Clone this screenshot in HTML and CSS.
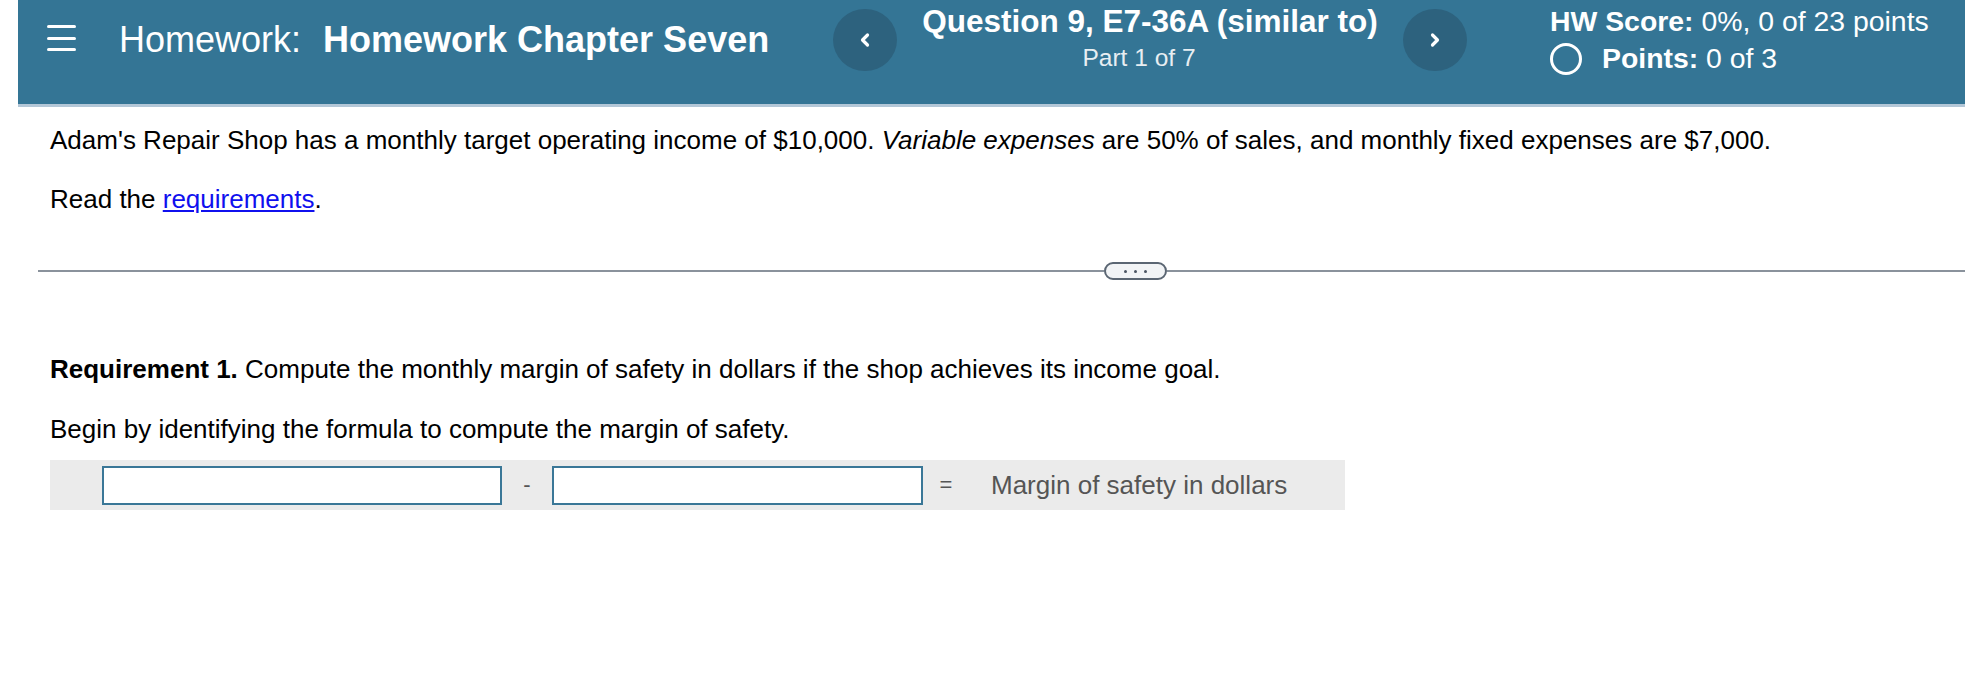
FILE: index.html
```html
<!DOCTYPE html>
<html>
<head>
<meta charset="utf-8">
<link rel="stylesheet" href="styles.css">
</head>
<body>
<header class="topbar">
  <div class="left">
    <div class="hamburger"><span></span><span></span><span></span></div>
    <div class="hw-title">Homework: <b>Homework Chapter Seven</b></div>
  </div>
  <div class="center">
    <div class="navbtn"><svg width="12" height="16" viewBox="0 0 12 16"><path d="M8.5 3 L3.5 8 L8.5 13" fill="none" stroke="#fff" stroke-width="3.2" stroke-linecap="round" stroke-linejoin="round"/></svg></div>
    <div class="qblock">
      <div class="qtitle">Question 9, E7-36A (similar to)</div>
      <div class="qpart">Part 1 of 7</div>
    </div>
    <div class="navbtn"><svg width="12" height="16" viewBox="0 0 12 16"><path d="M3.5 3 L8.5 8 L3.5 13" fill="none" stroke="#fff" stroke-width="3.2" stroke-linecap="round" stroke-linejoin="round"/></svg></div>
  </div>
  <div class="score">
    <div class="score-line"><b>HW Score:</b> 0%, 0 of 23 points</div>
    <div class="points-line"><span class="ring"></span><b>Points:</b>&nbsp;0 of 3</div>
  </div>
</header>
<main class="content">
  <p class="intro">Adam's Repair Shop has a monthly target operating income of $10,000. <i>Variable expenses</i> are 50% of sales, and monthly fixed expenses are $7,000.</p>
  <p class="read">Read the <a href="#" class="link">requirements</a>.</p>
</main>
<div class="divider">
  <span class="rule"></span>
  <span class="pill"><i></i><i></i><i></i></span>
  <span class="rule"></span>
</div>
<section class="content lower">
  <p class="req"><b>Requirement 1.</b> Compute the monthly margin of safety in dollars if the shop achieves its income goal.</p>
  <p class="begin">Begin by identifying the formula to compute the margin of safety.</p>
  <div class="formula">
    <span class="inp inp1"></span>
    <span class="op op-minus">-</span>
    <span class="inp inp2"></span>
    <span class="op op-eq">=</span>
    <span class="result">Margin of safety in dollars</span>
  </div>
</section>
</body>
</html>
```

FILE: styles.css
```css
html, body {
  margin: 0;
  padding: 0;
  background: #fff;
  font-family: "Liberation Sans", Arial, Helvetica, sans-serif;
  color: #000;
}

.topbar {
  margin-left: 18px;
  height: 104px;
  background: #347595;
  border-bottom: 3px solid #b3c7d7;
  display: flex;
  align-items: flex-start;
  color: #fff;
}

.left {
  width: 815px;
  display: flex;
  align-items: center;
  height: 80px;
  padding-left: 29px;
  box-sizing: border-box;
}

.hamburger {
  width: 29px;
  display: flex;
  flex-direction: column;
  gap: 8.5px;
  margin-top: -4px;
}
.hamburger span {
  display: block;
  height: 3px;
  background: #fff;
  border-radius: 2px;
}

.hw-title {
  margin-left: 43px;
  font-size: 36px;
  white-space: nowrap;
}
.hw-title b { margin-left: 12px; }

.center {
  display: flex;
  align-items: flex-start;
}

.navbtn {
  width: 64px;
  height: 62px;
  margin-top: 9px;
  border-radius: 50%;
  background: #2d627e;
  display: flex;
  align-items: center;
  justify-content: center;
}

.qblock {
  width: 506px;
  display: flex;
  flex-direction: column;
  align-items: center;
  padding-top: 3px;
}
.qtitle {
  font-size: 31.5px;
  font-weight: bold;
  line-height: 36px;
  white-space: nowrap;
}
.qpart {
  font-size: 24.5px;
  line-height: 38px;
  color: #e8eef2;
  margin-right: 22px;
}

.score {
  margin-left: 83px;
  padding-top: 3px;
  font-size: 28.4px;
  white-space: nowrap;
}
.score-line { line-height: 36px; }
.points-line {
  line-height: 38px;
  display: flex;
  align-items: center;
}
.ring {
  width: 26px;
  height: 26px;
  border: 3px solid #fff;
  border-radius: 50%;
  margin-right: 20px;
  margin-top: 2px;
}

.content {
  padding-left: 50px;
  font-size: 26px;
}
.content p {
  margin: 0;
  line-height: 36px;
  white-space: nowrap;
}
.intro { margin-top: 15px !important; }
.read { margin-top: 23px !important; }
.link { color: #1010ee; text-decoration: underline; }

.divider {
  display: flex;
  align-items: center;
  margin-left: 38px;
  margin-top: 44px;
  height: 20px;
}
.rule {
  flex: 1;
  height: 2px;
  background: #8a929c;
}
.rule:first-child { flex: 0 0 1066px; }
.pill {
  width: 59px;
  height: 14px;
  border: 2px solid #5b6673;
  border-radius: 9px;
  background: #f2f4f6;
  display: flex;
  align-items: center;
  justify-content: center;
  gap: 7px;
}
.pill i {
  width: 3px;
  height: 3px;
  border-radius: 50%;
  background: #4b5563;
}

.lower .req { margin-top: 70px; }
.lower .begin { margin-top: 23.5px; }

.formula {
  margin-top: 13.5px;
  width: 1295px;
  height: 50px;
  background: #ebebeb;
  display: flex;
  align-items: center;
  padding-left: 52px;
  box-sizing: border-box;
}
.inp {
  display: block;
  height: 39px;
  box-sizing: border-box;
  border: 2px solid #3a7797;
  background: #fff;
  margin-top: 1px;
}
.inp1 { width: 400px; }
.inp2 { width: 371px; }
.op {
  width: 50px;
  text-align: center;
  color: #555;
  font-size: 22px;
}
.op-eq { width: 46px; margin-right: 22px; }
.result {
  color: #555;
  font-size: 26px;
}
```
